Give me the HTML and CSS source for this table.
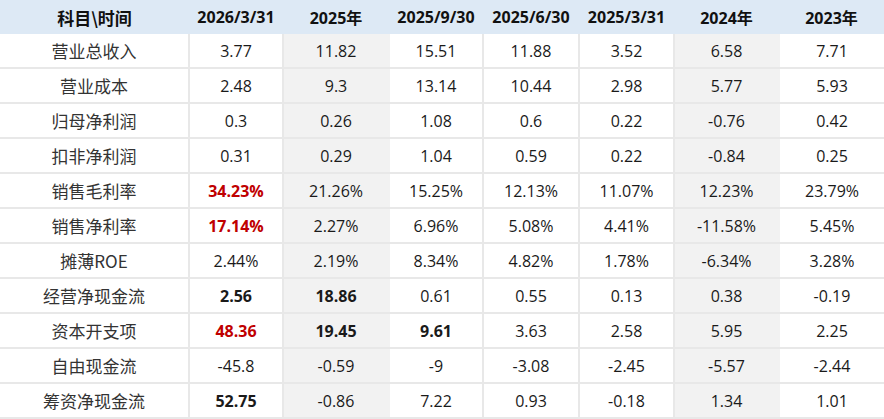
FILE: index.html
```html
<!DOCTYPE html>
<html lang="zh">
<head>
<meta charset="utf-8">
<link rel="stylesheet" href="styles.css">
</head>
<body>
<table class="fin">
  <colgroup>
    <col class="c0"><col class="c1"><col class="c2"><col class="c3"><col class="c4"><col class="c5"><col class="c6"><col class="c7">
  </colgroup>
  <thead>
    <tr><th class="lbl">科目\时间</th><th>2026/3/31</th><th>2025年</th><th>2025/9/30</th><th>2025/6/30</th><th>2025/3/31</th><th>2024年</th><th>2023年</th></tr>
  </thead>
  <tbody>
    <tr><td class="lbl">营业总收入</td><td>3.77</td><td class="g">11.82</td><td>15.51</td><td>11.88</td><td>3.52</td><td class="g">6.58</td><td>7.71</td></tr>
    <tr><td class="lbl">营业成本</td><td>2.48</td><td class="g">9.3</td><td>13.14</td><td>10.44</td><td>2.98</td><td class="g">5.77</td><td>5.93</td></tr>
    <tr><td class="lbl">归母净利润</td><td>0.3</td><td class="g">0.26</td><td>1.08</td><td>0.6</td><td>0.22</td><td class="g">-0.76</td><td>0.42</td></tr>
    <tr><td class="lbl">扣非净利润</td><td>0.31</td><td class="g">0.29</td><td>1.04</td><td>0.59</td><td>0.22</td><td class="g">-0.84</td><td>0.25</td></tr>
    <tr><td class="lbl">销售毛利率</td><td class="b r">34.23%</td><td class="g">21.26%</td><td>15.25%</td><td>12.13%</td><td>11.07%</td><td class="g">12.23%</td><td>23.79%</td></tr>
    <tr><td class="lbl">销售净利率</td><td class="b r">17.14%</td><td class="g">2.27%</td><td>6.96%</td><td>5.08%</td><td>4.41%</td><td class="g">-11.58%</td><td>5.45%</td></tr>
    <tr><td class="lbl">摊薄ROE</td><td>2.44%</td><td class="g">2.19%</td><td>8.34%</td><td>4.82%</td><td>1.78%</td><td class="g">-6.34%</td><td>3.28%</td></tr>
    <tr><td class="lbl">经营净现金流</td><td class="b">2.56</td><td class="g b">18.86</td><td>0.61</td><td>0.55</td><td>0.13</td><td class="g">0.38</td><td>-0.19</td></tr>
    <tr><td class="lbl">资本开支项</td><td class="b r">48.36</td><td class="g b">19.45</td><td class="b">9.61</td><td>3.63</td><td>2.58</td><td class="g">5.95</td><td>2.25</td></tr>
    <tr><td class="lbl">自由现金流</td><td>-45.8</td><td class="g">-0.59</td><td>-9</td><td>-3.08</td><td>-2.45</td><td class="g">-5.57</td><td>-2.44</td></tr>
    <tr><td class="lbl">筹资净现金流</td><td class="b">52.75</td><td class="g">-0.86</td><td>7.22</td><td>0.93</td><td>-0.18</td><td class="g">1.34</td><td>1.01</td></tr>
  </tbody>
</table>
</body>
</html>
```
FILE: styles.css
```css
html, body {
  margin: 0;
  padding: 0;
  background: #ffffff;
}
.fin {
  width: 884px;
  border-collapse: collapse;
  table-layout: fixed;
  font-family: "Open Sans", "Noto Sans CJK SC", sans-serif;
  font-size: 16px;
  color: #1a1a1a;
}
.c0 { width: 189px; }
.c1 { width: 94px; }
.c2 { width: 106px; }
.c3 { width: 94px; }
.c4 { width: 96px; }
.c5 { width: 95px; }
.c6 { width: 105px; }
.c7 { width: 105px; }
.fin th {
  height: 34px;
  padding: 0;
  background: #dde9f5;
  font-weight: 700;
  font-size: 16px;
  text-align: center;
  color: #111;
  white-space: nowrap;
}
.fin td {
  height: 33px;
  padding: 0;
  text-align: center;
  border: 2px solid #e8e8e8;
  border-top: none;
  white-space: nowrap;
}
.fin tr td:first-child { border-left: none; }
.fin tr td:last-child { border-right: none; }
.fin .lbl {
  font-family: "Noto Sans CJK SC", sans-serif;
  font-weight: 400;
  font-size: 17px;
  color: #333;
}
.fin th.lbl {
  font-weight: 700;
  font-size: 17px;
  color: #111;
}
.fin td.g {
  background: #f2f2f2;
  border-left-color: #f2f2f2;
  border-right-color: #f2f2f2;
}
.fin .b { font-weight: 700; }
.fin .r { color: #c00000; }
```
